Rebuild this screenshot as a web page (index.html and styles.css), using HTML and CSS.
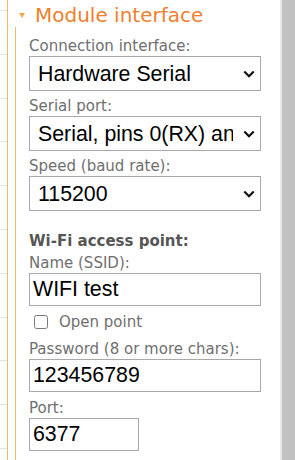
FILE: index.html
```html
<!DOCTYPE html>
<html>
<head>
<meta charset="utf-8">
<link rel="stylesheet" href="styles.css">
</head>
<body>
<div class="page">
  <div class="rail">
    <div class="rail-item"></div><div class="rail-item"></div><div class="rail-item"></div>
    <div class="rail-item"></div><div class="rail-item"></div><div class="rail-item"></div>
    <div class="rail-item"></div><div class="rail-item"></div><div class="rail-item"></div>
    <div class="rail-item"></div><div class="rail-item"></div>
  </div>
  <div class="main">
    <div class="section-head">
      <span class="tri"></span>
      <span class="section-title">Module interface</span>
    </div>
    <div class="fieldset">
      <div class="field">
        <label class="label">Connection interface:</label>
        <div class="select-wrap">
          <select class="select"><option>Hardware Serial</option></select>
          <svg class="chev" width="12" height="8" viewBox="0 0 12 8"><polyline points="1.3,1.5 6,6.2 10.7,1.5" fill="none" stroke="#111" stroke-width="2.2"/></svg>
        </div>
      </div>
      <div class="field">
        <label class="label">Serial port:</label>
        <div class="select-wrap">
          <select class="select"><option>Serial, pins 0(RX) and 1(TX)</option></select>
          <svg class="chev" width="12" height="8" viewBox="0 0 12 8"><polyline points="1.3,1.5 6,6.2 10.7,1.5" fill="none" stroke="#111" stroke-width="2.2"/></svg>
        </div>
      </div>
      <div class="field">
        <label class="label">Speed (baud rate):</label>
        <div class="select-wrap">
          <select class="select"><option>115200</option></select>
          <svg class="chev" width="12" height="8" viewBox="0 0 12 8"><polyline points="1.3,1.5 6,6.2 10.7,1.5" fill="none" stroke="#111" stroke-width="2.2"/></svg>
        </div>
      </div>
      <div class="group-title">Wi-Fi access point:</div>
      <div class="field field-tight">
        <label class="label">Name (SSID):</label>
        <input class="input" type="text" value="WIFI test">
      </div>
      <label class="check-row">
        <input class="check" type="checkbox">
        <span class="check-text">Open point</span>
      </label>
      <div class="field field-pass">
        <label class="label">Password (8 or more chars):</label>
        <input class="input" type="text" value="123456789">
      </div>
      <div class="field field-port">
        <label class="label">Port:</label>
        <input class="input input-short" type="text" value="6377">
      </div>
    </div>
  </div>
  <div class="scrollbar"></div>
</div>
</body>
</html>
```
FILE: styles.css
```css
* { box-sizing: border-box; }
html, body { margin: 0; padding: 0; background: #fff; }
body { font-family: "DejaVu Sans", Verdana, sans-serif; }

.page {
  display: flex;
  width: 295px;
  height: 460px;
  overflow: hidden;
}

.rail {
  flex: none;
  width: 8px;
  border-right: 1px solid #f3ba66;
  padding-top: 10px;
}
.rail-item {
  height: 43.8px;
  border-top: 1px solid #e3e3e3;
}

.main {
  flex: 1;
  min-width: 0;
  display: flex;
  flex-direction: column;
}

.section-head {
  display: flex;
  align-items: flex-start;
  height: 27px;
  padding: 3px 0 0 11px;
  flex: none;
}
.tri {
  width: 0;
  height: 0;
  border-left: 3.5px solid transparent;
  border-right: 3.5px solid transparent;
  border-top: 5px solid #f5a448;
  margin-top: 10px;
  margin-right: 10px;
}
.section-title {
  font-size: 20px;
  line-height: 24px;
  color: #f07f2e;
  white-space: nowrap;
}

.fieldset {
  flex: 1;
  margin-left: 7px;
  border-left: 1px solid #f3ba66;
  padding: 9px 0 0 13px;
}

.field + .field { margin-top: 5px; }
.label {
  display: block;
  font-size: 15px;
  line-height: 20px;
  color: #6f6f6f;
  white-space: nowrap;
}

.select-wrap {
  position: relative;
  width: 232px;
  height: 35px;
}
.select {
  appearance: none;
  -webkit-appearance: none;
  display: block;
  width: 100%;
  height: 35px;
  margin: 0;
  border: 1px solid #a9a9a9;
  border-radius: 0;
  background: #fff;
  color: #000;
  font-family: "Liberation Sans", Arial, sans-serif;
  font-size: 21.33px;
  padding: 0 27px 0 8px;
  outline: none;
}
.chev {
  position: absolute;
  right: 6px;
  top: 14px;
  pointer-events: none;
}

.group-title {
  margin-top: 19.5px;
  font-size: 15px;
  line-height: 20px;
  font-weight: bold;
  color: #565656;
}
.field-tight { margin-top: 2px; }

.input {
  display: block;
  width: 232px;
  height: 33px;
  margin: 0;
  border: 1px solid #a9a9a9;
  border-radius: 0;
  padding: 0 3px;
  background: #fff;
  color: #000;
  font-family: "Liberation Sans", Arial, sans-serif;
  font-size: 21.33px;
  outline: none;
}
.input-short { width: 110px; }

.check-row {
  display: flex;
  align-items: center;
  height: 20px;
  margin-top: 6.5px;
  padding-left: 5px;
}
.check {
  appearance: none;
  -webkit-appearance: none;
  width: 14px;
  height: 14px;
  margin: 0 11px 0 0;
  border: 1.4px solid #7a7a7a;
  border-radius: 2.5px;
  background: #fff;
}
.check-text {
  font-size: 15px;
  line-height: 20px;
  color: #6f6f6f;
}

.field-pass { margin-top: 7px !important; }
.field-port { margin-top: 6px !important; }

.scrollbar {
  flex: none;
  width: 15px;
  background: #c1c1c1;
  border-left: 2px solid #e9e9e9;
}
```
